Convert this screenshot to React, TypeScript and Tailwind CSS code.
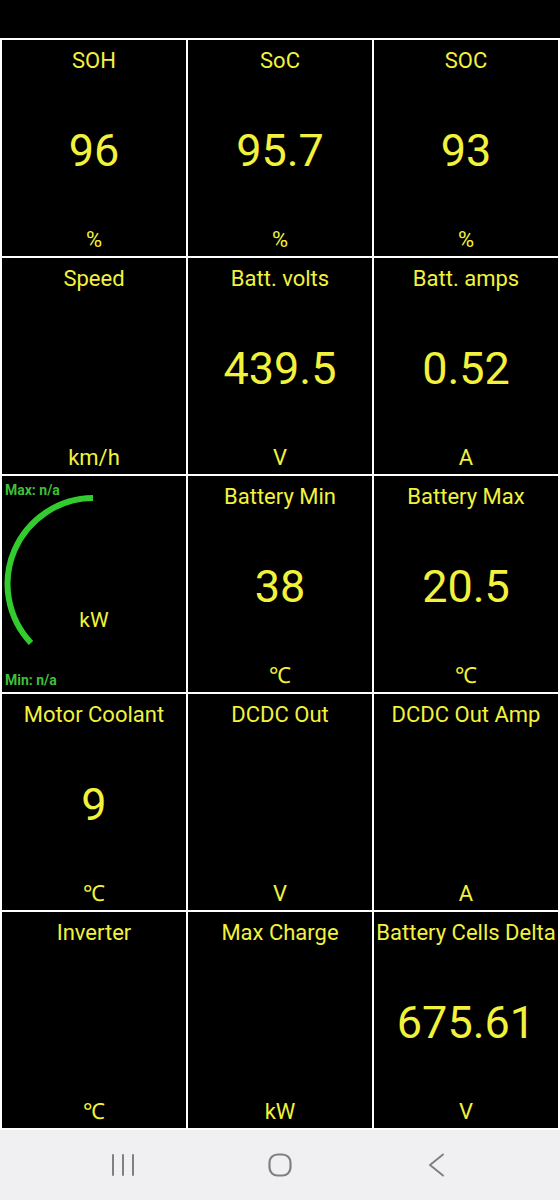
import React from "react";

type Tile = { label: string; value?: string; unit: string };

const tiles: (Tile | "gauge")[] = [
  { label: "SOH", value: "96", unit: "%" },
  { label: "SoC", value: "95.7", unit: "%" },
  { label: "SOC", value: "93", unit: "%" },
  { label: "Speed", unit: "km/h" },
  { label: "Batt. volts", value: "439.5", unit: "V" },
  { label: "Batt. amps", value: "0.52", unit: "A" },
  "gauge",
  { label: "Battery Min", value: "38", unit: "℃" },
  { label: "Battery Max", value: "20.5", unit: "℃" },
  { label: "Motor Coolant", value: "9", unit: "℃" },
  { label: "DCDC Out", unit: "V" },
  { label: "DCDC Out Amp", unit: "A" },
  { label: "Inverter", unit: "℃" },
  { label: "Max Charge", unit: "kW" },
  { label: "Battery Cells Delta", value: "675.61", unit: "V" },
];

function ValueTile({ t }: { t: Tile }) {
  return (
    <div className="bg-black flex flex-col items-center text-[#f2f23c] overflow-hidden">
      <div className="pt-[8px] text-[22px] leading-[26px] whitespace-nowrap">{t.label}</div>
      <div className="flex-1 flex items-center text-[45px] leading-none">{t.value ?? ""}</div>
      <div className="pb-[3px] text-[22px] leading-[26px]">{t.unit}</div>
    </div>
  );
}

function GaugeTile() {
  return (
    <div className="relative bg-black overflow-hidden">
      <svg className="absolute inset-0" width="184" height="216" viewBox="0 0 184 216">
        <path d="M 91 22 A 86 86 0 0 0 29 167" fill="none" stroke="#33cc2e" strokeWidth={6} />
      </svg>
      <div className="absolute top-[6px] left-[3px] text-[14px] leading-[16px] font-bold text-[#3fbf37]">Max: n/a</div>
      <div className="absolute top-[132px] left-0 w-full text-center text-[21px] leading-[25px] text-[#f2f23c]">kW</div>
      <div className="absolute bottom-[4px] left-[3px] text-[14px] leading-[16px] font-bold text-[#3fbf37]">Min: n/a</div>
    </div>
  );
}

export default function App() {
  return (
    <div className="w-[560px] h-[1200px] bg-black flex flex-col font-['Roboto',sans-serif]">
      <div className="h-[38px] shrink-0" />
      <div className="grid grid-cols-3 grid-rows-[repeat(5,216px)] gap-[2px] p-[2px] bg-white shrink-0">
        {tiles.map((t, i) => (t === "gauge" ? <GaugeTile key={i} /> : <ValueTile key={i} t={t} />))}
      </div>
      <nav className="flex-1 bg-[#f0f0f2] flex items-center justify-center gap-[133px]">
        <svg width="24" height="24" viewBox="0 0 24 24">
          <g stroke="#808080" strokeWidth={2} strokeLinecap="round">
            <line x1="2" y1="2" x2="2" y2="22" />
            <line x1="12" y1="2" x2="12" y2="22" />
            <line x1="22" y1="2" x2="22" y2="22" />
          </g>
        </svg>
        <svg width="24" height="24" viewBox="0 0 24 24">
          <rect x="1.5" y="1.5" width="21" height="21" rx="8" fill="none" stroke="#808080" strokeWidth={2.2} />
        </svg>
        <svg width="24" height="24" viewBox="0 0 24 24">
          <polyline points="18,1.5 5,12 18,22.5" fill="none" stroke="#808080" strokeWidth={2} strokeLinecap="round" strokeLinejoin="round" />
        </svg>
      </nav>
    </div>
  );
}
